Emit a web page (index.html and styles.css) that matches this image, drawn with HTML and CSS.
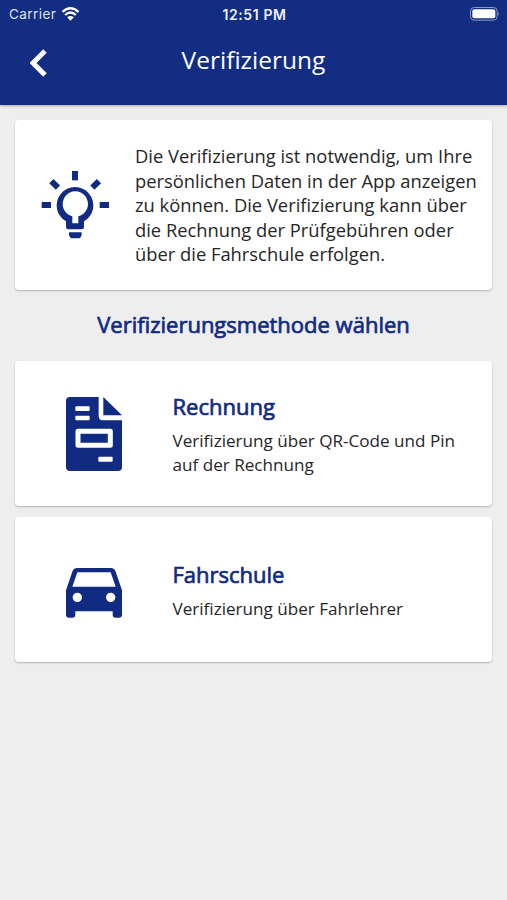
FILE: index.html
```html
<!DOCTYPE html>
<html lang="de">
<head>
  <meta charset="UTF-8">
  <title>Verifizierung</title>
  <link rel="stylesheet" href="styles.css">
</head>
<body>

<header>
  <div class="status-bar">
    <div class="carrier">
      <span>Carrier</span>
      <svg class="wifi" viewBox="0 0 54 42">
        <path d="M3 15 Q27 -7 51 15" fill="none" stroke="#fff" stroke-width="7"/>
        <path d="M11 24 Q27 9 43 24" fill="none" stroke="#fff" stroke-width="7"/>
        <path d="M17 31 Q27 23 37 31 L27 41 Z" fill="#fff"/>
      </svg>
    </div>
    <span class="time">12:51 PM</span>
    <svg class="battery" viewBox="0 0 90 42">
      <rect x="1.5" y="1.5" width="80" height="38" rx="11" fill="none" stroke="#8c99c7" stroke-width="3"/>
      <rect x="7" y="7" width="69" height="27" rx="6" fill="#fff"/>
      <path d="M85 14 Q90 20 85 27 Z" fill="#8c99c7"/>
    </svg>
  </div>
  <div class="nav-bar">
    <svg class="back" viewBox="0 0 54 84">
      <path d="M45 6 L9 42 L45 78" fill="none" stroke="#fff" stroke-width="15"/>
    </svg>
    <h1>Verifizierung</h1>
  </div>
</header>

<main>
  <div class="card info">
    <svg class="bulb" viewBox="30 30 210 210">
      <path fill-rule="evenodd" d="M108 184 A55 55 0 1 1 162 184 V201 Q162 208 155 208 H115 Q108 208 108 201 Z M127 190 H145 V169 A38 38 0 1 0 127 169 Z"/>
      <rect x="126" y="33" width="18" height="28"/>
      <rect x="35" y="126" width="28" height="18"/>
      <rect x="209" y="126" width="28" height="18"/>
      <rect x="-14" y="-9" width="28" height="18" transform="translate(74 73) rotate(45)"/>
      <rect x="-14" y="-9" width="28" height="18" transform="translate(197 73) rotate(-45)"/>
      <path d="M117 217 H155 V224 Q153 235 144 235 H128 Q119 235 117 224 Z"/>
    </svg>
    <p>Die Verifizierung ist notwendig, um Ihre<br>persönlichen Daten in der App anzeigen<br>zu können. Die Verifizierung kann über<br>die Rechnung der Prüfgebühren oder<br>über die Fahrschule erfolgen.</p>
  </div>

  <h2>Verifizierungsmethode wählen</h2>

  <div class="card method">
    <svg class="invoice" viewBox="48 36 168 222">
      <path d="M60 36 H146 V92 Q146 106 160 106 H216 V246 Q216 258 204 258 H60 Q48 258 48 246 V48 Q48 36 60 36 Z"/>
      <path d="M160 36 L216 91 H160 Z"/>
      <g fill="#fff">
        <rect x="76" y="64" width="43" height="14" rx="3"/>
        <rect x="76" y="92" width="43" height="14" rx="3"/>
        <rect x="145" y="215" width="43" height="15" rx="3"/>
      </g>
      <rect x="84" y="139" width="97" height="42" fill="none" stroke="#fff" stroke-width="15" stroke-linejoin="round"/>
    </svg>
    <div class="method-text">
      <h3>Rechnung</h3>
      <p>Verifizierung über QR-Code und Pin<br>auf der Rechnung</p>
    </div>
  </div>

  <div class="card method">
    <svg class="car" viewBox="48 54 168 150">
      <path fill-rule="evenodd" d="M80 54 H184 Q193 54 196 62 L216 121 V194 Q216 203 207 203 H197 Q188 203 188 194 V184 H76 V194 Q76 203 67 203 H57 Q48 203 48 194 V121 L68 62 Q71 54 80 54 Z M82 67 L67 110 H197 L182 67 Z"/>
      <circle cx="82" cy="142" r="14" fill="#fff"/>
      <circle cx="182" cy="142" r="14" fill="#fff"/>
    </svg>
    <div class="method-text">
      <h3>Fahrschule</h3>
      <p>Verifizierung über Fahrlehrer</p>
    </div>
  </div>
</main>

</body>
</html>
```
FILE: styles.css
```css
* {
  box-sizing: border-box;
}
body {
  font-family: 'Open Sans', sans-serif;
  background: #eeeeee;
  color: #262626;
  margin: 0;
  min-height: 100vh;
}
h1, h2, h3, p {
  margin: 0;
  font-weight: 400;
}
svg {
  display: block;
  flex: none;
  fill: #112b83;
}
header {
  height: 105px;
  background: #132d82;
  color: white;
  box-shadow: 0 1px 3px rgba(0, 0, 0, 0.3);
}
.status-bar {
  display: grid;
  grid-template-columns: 1fr auto 1fr;
  align-items: center;
  height: 28px;
  padding: 0 7px 0 9px;
  font-family: Inter, sans-serif;
  font-size: 13.5px;
}
.carrier {
  display: flex;
  align-items: center;
  gap: 5px;
  color: #dde1ef;
  letter-spacing: 0.45px;
}
.wifi {
  width: 19px;
  height: 14px;
}
.time {
  font-weight: 600;
  font-size: 14px;
  letter-spacing: 0.6px;
  color: #eef0f8;
}
.battery {
  width: 30px;
  height: 14px;
  justify-self: end;
}
.nav-bar {
  display: grid;
  grid-template-columns: 60px 1fr 60px;
  align-items: center;
  height: 68px;
}
.back {
  width: 18px;
  height: 28px;
  margin: 2px 0 0 30px;
}
h1 {
  font-size: 24.5px;
  line-height: 32px;
  padding-bottom: 4px;
  text-align: center;
}
main {
  padding: 15px 15px 0;
}
.card {
  display: flex;
  align-items: center;
  background: white;
  border-radius: 4px;
  box-shadow: 0 1px 2px rgba(0, 0, 0, 0.25);
}
.info {
  height: 170px;
  padding-left: 25px;
}
.info p {
  margin-left: 25px;
  padding-top: 1px;
  font-size: 18.35px;
  line-height: 24.4px;
  white-space: nowrap;
}
.bulb {
  width: 70px;
  height: 70px;
}
h2 {
  height: 71px;
  line-height: 69px;
  font-size: 22px;
  text-align: center;
}
h2, h3 {
  color: #112b83;
  -webkit-text-stroke: 0.7px #112b83;
}
.method {
  height: 145px;
  padding-left: 51px;
  margin-bottom: 11px;
}
.invoice {
  width: 56px;
  height: 74px;
}
.car {
  width: 56px;
  height: 50px;
  margin-top: 6px;
}
.method-text {
  margin-left: 50.5px;
}
h3 {
  font-size: 22px;
  line-height: 30px;
  margin-bottom: 8px;
}
.method p {
  font-size: 17.1px;
  line-height: 23.5px;
  white-space: nowrap;
}
```
